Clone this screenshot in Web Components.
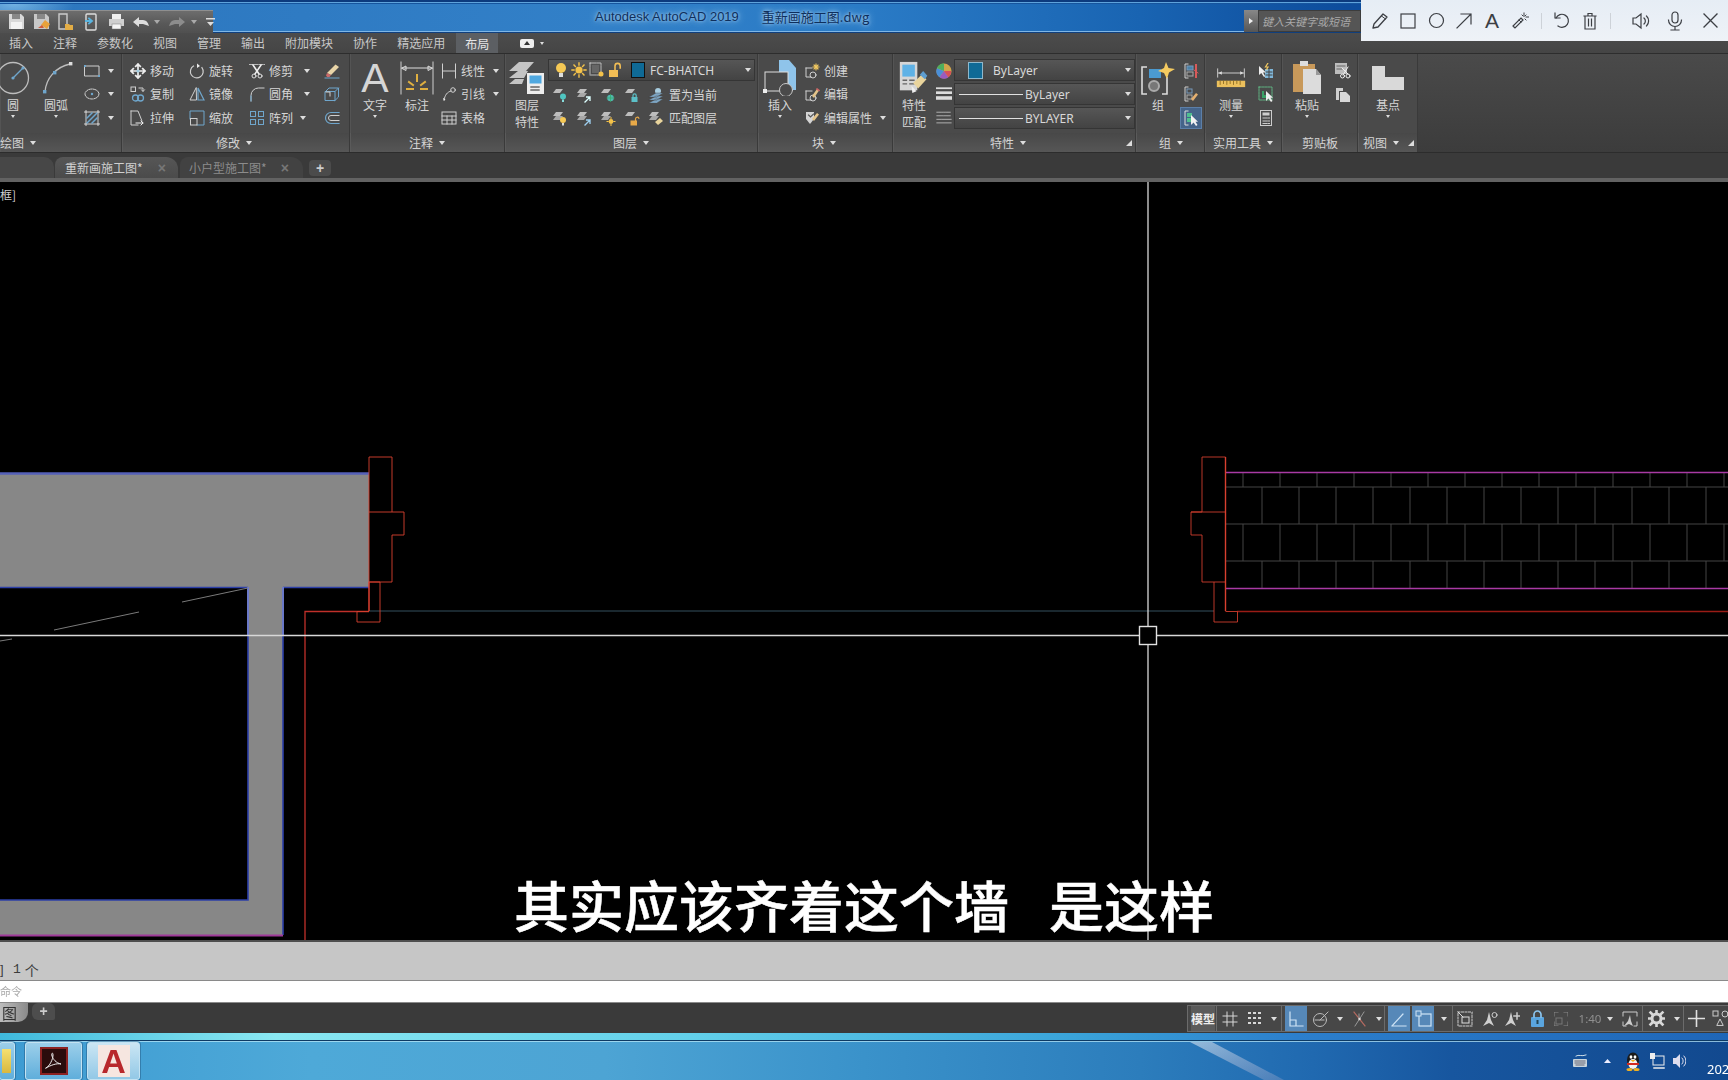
<!DOCTYPE html>
<html lang="zh"><head><meta charset="utf-8"><title>AutoCAD</title>
<style>
html,body{margin:0;padding:0;background:#000;overflow:hidden}
body{width:1728px;height:1080px;font-family:"Noto Sans CJK SC","Noto Sans",sans-serif;font-size:12px;color:#d8d8d8}
</style></head><body>
<cad-app>
 <win-title></win-title>
 <menu-tabs></menu-tabs>
 <rb-ribbon>
  <rb-panel label="绘图" w="122" lx="0">
    <rb-big label="圆" icon="circle" arrow style="margin-left:-7px"></rb-big>
    <rb-big label="圆弧" icon="arc" arrow style="margin-left:3px"></rb-big>
    <rb-col style="margin-left:8px">
      <rb-small icon="rect" arrow am="8"></rb-small><rb-small icon="ellipse" arrow am="8"></rb-small><rb-small icon="hatch" arrow am="8"></rb-small>
    </rb-col>
  </rb-panel>
  <rb-panel label="修改" w="228" lx="94">
    <rb-col w="59" style="margin-left:8px"><rb-small icon="move" text="移动"></rb-small><rb-small icon="copy" text="复制"></rb-small><rb-small icon="stretch" text="拉伸"></rb-small></rb-col>
    <rb-col w="60"><rb-small icon="rotate" text="旋转"></rb-small><rb-small icon="mirror" text="镜像"></rb-small><rb-small icon="scale" text="缩放"></rb-small></rb-col>
    <rb-col w="75"><rb-small icon="trim" text="修剪" arrow am="11"></rb-small><rb-small icon="fillet" text="圆角" arrow am="11"></rb-small><rb-small icon="array" text="阵列" arrow am="7"></rb-small></rb-col>
    <rb-col><rb-small icon="eraser"></rb-small><rb-small icon="box3d"></rb-small><rb-small icon="offset"></rb-small></rb-col>
  </rb-panel>
  <rb-panel label="注释" w="155" lx="59">
    <rb-big label="文字" icon="textA" arrow style="margin-left:5px"></rb-big>
    <rb-big label="标注" icon="dim" style="margin-left:2px"></rb-big>
    <rb-col style="margin-left:4px"><rb-small icon="linear" text="线性" arrow am="8"></rb-small><rb-small icon="leader" text="引线" arrow am="8"></rb-small><rb-small icon="table" text="表格"></rb-small></rb-col>
  </rb-panel>
  <rb-panel label="图层" w="253" lx="108">
    <rb-big label="图层" label2="特性" icon="layerprops" style="margin-left:2px"></rb-big>
    <rb-col style="margin-left:1px">
      <rb-select w="207" layer text="FC-BHATCH"></rb-select>
      <rb-iconrow icons="l1,l2,l3,l4,l5" text="置为当前"></rb-iconrow>
      <rb-iconrow icons="m1,m2,m3,m4,m5" text="匹配图层"></rb-iconrow>
    </rb-col>
  </rb-panel>
  <rb-panel label="块" w="135" lx="54">
    <rb-big label="插入" icon="insert" arrow style="margin-left:2px"></rb-big>
    <rb-col style="margin-left:4px"><rb-small icon="bcreate" text="创建"></rb-small><rb-small icon="bedit" text="编辑"></rb-small><rb-small icon="battr" text="编辑属性" arrow am="8"></rb-small></rb-col>
  </rb-panel>
  <rb-panel label="特性" w="243" lx="97" corner>
    <rb-big label="特性" label2="匹配" icon="match" style="margin-left:1px"></rb-big>
    <rb-col w="18" style="margin-left:2px"><rb-small icon="wheel"></rb-small><rb-small icon="lweight"></rb-small><rb-small icon="ltype"></rb-small></rb-col>
    <rb-col>
      <rb-select w="181" swatch="13" text="ByLayer" tm="10"></rb-select>
      <rb-select w="181" line="64" text="ByLayer" tm="2"></rb-select>
      <rb-select w="181" line="64" text="BYLAYER" tm="2"></rb-select>
    </rb-col>
  </rb-panel>
  <rb-panel label="组" w="69" lx="23">
    <rb-big label="组" icon="group" w="36" style="margin-left:4px"></rb-big>
    <rb-col w="24" style="margin-left:3px"><rb-small icon="ungroup" box></rb-small><rb-small icon="gedit" box></rb-small><rb-small icon="gsel" box active></rb-small></rb-col>
  </rb-panel>
  <rb-panel label="实用工具" w="77" lx="8">
    <rb-big label="测量" icon="measure" arrow style="margin-left:6px"></rb-big>
    <rb-col w="24" style="margin-left:3px"><rb-small icon="qsel" box></rb-small><rb-small icon="count" box></rb-small><rb-small icon="calc" box></rb-small></rb-col>
  </rb-panel>
  <rb-panel label="剪贴板" w="76" lx="20" noarrow>
    <rb-big label="粘贴" icon="paste" arrow style="margin-left:5px"></rb-big>
    <rb-col w="24" style="margin-left:4px"><rb-small icon="cut" box></rb-small><rb-small icon="pcopy" box></rb-small></rb-col>
  </rb-panel>
  <rb-panel label="视图" w="60" lx="5" corner>
    <rb-big label="基点" icon="base" arrow style="margin-left:10px"></rb-big>
  </rb-panel>
 </rb-ribbon>
 <file-tabs></file-tabs>
 <cad-canvas></cad-canvas>
 <cmd-area></cmd-area>
 <layout-bar></layout-bar>
 <task-bar></task-bar>
 <note-toolbar></note-toolbar>
</cad-app>
<script>
const FONT='"Noto Sans CJK SC","Noto Sans",sans-serif';
const ARW='.arw{display:inline-block;width:0;height:0;border:3px solid transparent;border-top:4px solid #ddd;border-bottom:0;flex:none}';
const G='#cfcfcf',B='#6fa6cc';
const sv=(w,h,s)=>`<svg xmlns="http://www.w3.org/2000/svg" width="${w}" height="${h}" viewBox="0 0 ${w} ${h}" fill="none" stroke-linecap="square" style="display:block">${s}</svg>`;
const sz=(rw,rh,w,h,s)=>`<svg xmlns="http://www.w3.org/2000/svg" width="${rw}" height="${rh}" viewBox="0 0 ${w} ${h}" fill="none" stroke-linecap="square" preserveAspectRatio="none" style="display:block">${s}</svg>`;
const s16=s=>sv(16,16,s);
const slab=(y,f)=>`<path d="M1 ${y+4}L4 ${y}h7L8 ${y+4}z" fill="${f||'#bdbdbd'}"/>`;
const L1=s=>s16(slab(2)+s);
const L2=s=>s16(slab(2)+slab(6,'#a8a8a8')+s);
const ICONS={
circle:sv(36,36,`<circle cx="18" cy="18" r="15.5" stroke="#bdbdbd" stroke-width="1.3"/><path d="M18 18L28 8" stroke="${B}" stroke-width="1.3"/><circle cx="18" cy="18" r="1.6" fill="${B}"/><circle cx="28" cy="8" r="1.6" fill="${B}"/>`),
arc:sv(36,36,`<path d="M7 32C8 18 18 7 32 4" stroke="#bdbdbd" stroke-width="1.3"/><rect x="5" y="30" width="3.4" height="3.4" fill="${B}"/><rect x="15" y="11" width="3.4" height="3.4" fill="${B}"/><rect x="31" y="2" width="3.4" height="3.4" fill="#ddd"/>`),
rect:s16(`<path d="M1 3h14v10H1z" stroke="${G}"/><rect x="0" y="2" width="2" height="2" fill="${B}"/><rect x="14" y="12" width="2" height="2" fill="${B}"/>`),
ellipse:s16(`<ellipse cx="8" cy="8" rx="7" ry="5" stroke="${G}" stroke-dasharray="3 1.2"/><circle cx="8" cy="8" r="1.2" fill="${B}"/>`),
hatch:s16(`<rect x="2" y="2" width="12" height="12" stroke="${G}"/><path d="M3 8l5-5M3 13L13 3M8 13l5-5" stroke="${B}" stroke-width="1.5"/><path d="M0 2h2M2 0v2M14 0v2M14 2h2M0 14h2M2 14v2M14 14h2M14 14v2" stroke="${G}"/>`),
move:s16(`<path d="M8 1v14M1 8h14M8 1L5.7 3.3M8 1l2.3 2.3M8 15l-2.3-2.3M8 15l2.3-2.3M1 8l2.3-2.3M1 8l2.3 2.3M15 8l-2.3-2.3M15 8l-2.3 2.3" stroke="#eee" stroke-width="1.7"/><circle cx="8" cy="8" r="1.6" fill="#9ecbe0"/>`),
copy:s16(`<rect x="1" y="1" width="4.5" height="4.5" stroke="${G}"/><path d="M9 2h4v3M11.5 3.8L13 5.5l1.5-1.7" stroke="${G}"/><circle cx="5.5" cy="12" r="3" stroke="${B}" stroke-width="1.3"/><circle cx="10.5" cy="12" r="3" stroke="${B}" stroke-width="1.3"/>`),
stretch:s16(`<path d="M1 1h7l4 10M1 1v14h7" stroke="${G}"/><path d="M6 13h7M11 11l2 2-2 2" stroke="#eee"/>`),
rotate:s16(`<path d="M11.5 3.2A6.4 6.4 0 1 1 3 4.5" stroke="${G}" stroke-width="1.2" transform="rotate(20 8 8)"/><path d="M8 .5l3 2.5-3 2z" fill="#eee"/>`),
mirror:s16(`<path d="M7 2L1 14h6z" stroke="${G}"/><path d="M9 2l6 12H9z" stroke="${B}" stroke-width="1.2"/>`),
scale:s16(`<path d="M1 9V1h14v14H8" stroke="${B}"/><rect x="1.5" y="8.5" width="6.5" height="6.5" stroke="${G}"/>`),
trim:s16(`<path d="M0 1.5h16" stroke="#bbb" stroke-dasharray="1.5 1"/><path d="M4 2l6 9M12 2l-6 9" stroke="#eee" stroke-width="1.6"/><circle cx="5" cy="13" r="2" stroke="#ddd"/><circle cx="11" cy="13" r="2" stroke="#ddd"/>`),
fillet:s16(`<path d="M2 15V9.5A7.5 7.5 0 0 1 9.5 2H15" stroke="${G}"/><path d="M2 15v-5" stroke="${B}"/>`),
array:s16(`<rect x="1.5" y="1.5" width="5" height="5" stroke="${B}"/><rect x="9.5" y="1.5" width="5" height="5" stroke="${B}"/><rect x="1.5" y="9.5" width="5" height="5" stroke="${B}"/><rect x="9.5" y="9.5" width="5" height="5" stroke="${B}"/>`),
eraser:s16(`<path d="M3 10l8.5-8.5L15 4l-8 8z" fill="#e9d5a8"/><path d="M3 10l4 2-1.5 2H3.2L2 12.5z" fill="#c96a6a"/><path d="M1 15h14" stroke="${B}"/>`),
box3d:s16(`<path d="M1.5 5.5h9.5v9H1.5zM1.5 5.5L5 2h9.5v9L11 14.5M11 5.5L14.5 2" stroke="${B}"/><path d="M2 6h4v4" stroke="${G}"/>`),
offset:s16(`<path d="M15 2.5H7a5.5 5.5 0 0 0 0 11h8" stroke="${B}" stroke-width="1.2"/><path d="M15 5.5H7a2.5 2.5 0 0 0 0 5h8" stroke="${G}"/>`),
textA:`<span style="font:500 41px/36px 'Liberation Sans',sans-serif;color:#d6d6d6;display:block;height:36px;overflow:hidden">A</span>`,
dim:sv(36,36,`<path d="M2 2v32M34 2v32" stroke="${G}"/><path d="M3 8h30M3 8l4-2v4zM33 8l-4-2v4z" stroke="#ddd"/><path d="M18 15v6M10 22l4 3M26 22l-4 3M8 29h6M22 29h6" stroke="#e0b040" stroke-width="2"/>`),
linear:s16(`<path d="M1.5 1v14M14.5 1v14M2 8h12" stroke="${G}"/>`),
leader:s16(`<circle cx="12" cy="4" r="2.3" stroke="${G}"/><path d="M10 5C6 6 4 9 3 14" stroke="${G}"/><path d="M3 15l-1-3 2.5 1z" fill="#eee"/>`),
table:s16(`<rect x="1" y="2" width="14" height="12" stroke="${G}"/><path d="M1 6h14M1 10h14M6 6v8M11 6v8" stroke="${G}"/>`),
layerprops:sv(36,36,`<path d="M0 11L10 2h15l-8 9zM0 18l9-7h10l-4 7zM0 24l6-5h9l-2 5z" fill="#c4c4c4"/><rect x="18" y="13" width="17" height="21" fill="#eee"/><rect x="20.5" y="15.5" width="12" height="8" fill="#4fa8e0"/><path d="M22 27h8M22 30h8" stroke="#666" stroke-width="1.4"/>`),
bulb:s16(`<circle cx="8" cy="6" r="5" fill="#f6c955"/><rect x="6" y="11" width="4" height="4" fill="#ddd"/>`),
sun:s16(`<circle cx="8" cy="8" r="3.6" fill="#f4c24a"/><path d="M8 1v2M8 13v2M1 8h2M13 8h2M3 3l1.4 1.4M11.6 11.6L13 13M3 13l1.4-1.4M11.6 4.4L13 3" stroke="#f4c24a" stroke-width="1.4"/>`),
freeze:s16(`<rect x="1" y="1" width="11" height="12" stroke="#bbb" stroke-dasharray="2.5 1"/><rect x="3" y="3" width="7" height="8" fill="#666"/><circle cx="12" cy="12" r="2.5" fill="#f4c24a"/>`),
lockopen:s16(`<rect x="2" y="8" width="9" height="7" fill="#f1bd55"/><path d="M8 8V4a2.6 2.6 0 0 1 5.2 0v2" stroke="#f1bd55" stroke-width="1.6"/>`),
l1:L1(`<circle cx="11" cy="9.5" r="3" fill="#4fc4c0"/><rect x="10" y="12.5" width="2" height="2.5" fill="#8dd"/>`),
l2:L2(`<path d="M9 15l5-5M14 10v3.4M14 10h-3.4" stroke="#dff" stroke-width="1.3"/>`),
l3:L1(`<circle cx="10.5" cy="11" r="3.3" fill="#4fb8b0"/><path d="M7 11h7M10.5 7.5v7" stroke="#3a6" stroke-width=".7"/>`),
l4:L1(`<rect x="7.5" y="10" width="6" height="5" fill="#5cc0c8"/><path d="M9 10V8.5a1.6 1.6 0 0 1 3.2 0V10" stroke="#5cc0c8" stroke-width="1.2"/>`),
l5:s16(`<circle cx="10" cy="4" r="3" fill="#a8cde0"/><path d="M1 10l7-4h7l-6 4zM1 13l7-4h7l-6 4zM1 16l7-4h7l-6 4z" fill="#7ea6c4" stroke="#444" stroke-width=".4"/>`),
m1:L2(`<circle cx="11" cy="10" r="3" fill="#f6c955"/><rect x="10" y="13" width="2" height="2.5" fill="#ddd"/>`),
m2:L2(`<path d="M9 15l5-5M14 10v3.4M14 10h-3.4" stroke="#9fd0f0" stroke-width="1.3"/>`),
m3:L2(`<circle cx="11" cy="11.5" r="2.4" fill="#f4c24a"/><path d="M11 7.5v1.2M11 14.2v1.3M7 11.5h1.2M13.8 11.5H15" stroke="#f4c24a"/>`),
m4:L1(`<rect x="6.5" y="10.5" width="6.5" height="5" fill="#e8a948"/><path d="M11.5 10.5V9a1.8 1.8 0 0 1 3.4-.8" stroke="#e8a948" stroke-width="1.2"/>`),
m5:L2(`<path d="M7 12l5-4 3 3-5 4z" fill="#e8d49c"/>`),
insert:sv(36,36,`<path d="M17 0h10l7 8v22H17z" fill="#8fc4ea"/><rect x="3" y="12" width="23" height="19" fill="#4a4a4a" stroke="#ddd"/><circle cx="24" cy="30" r="6.5" fill="#4a4a4a" stroke="#c8c8c8"/><rect x="1" y="29" width="4" height="4" fill="#eee"/>`),
bcreate:s16(`<path d="M2 5v9h5M2 5h6" stroke="${G}"/><circle cx="9" cy="12" r="3" stroke="${G}"/><path d="M12 1v6M9 4h6M10 2l4 4M14 2l-4 4" stroke="#f1c860" stroke-width="1.1"/>`),
bedit:s16(`<path d="M2 5v9h5M2 5h6" stroke="${G}"/><circle cx="9" cy="12" r="3" stroke="${G}"/><path d="M8 10l5-7 2 1.5L10 12z" fill="#e4c48a"/><path d="M13 3l2 1.5" stroke="#c66" stroke-width="1.6"/>`),
battr:s16(`<path d="M2 2h8v7l-4 5-4-5z" fill="#d4d4d4"/><path d="M4.5 5l2 2 3-3" stroke="#555" stroke-width="1.2"/><path d="M8 9l5-6 2 1.5L10 11z" fill="#e4c48a"/>`),
match:sz(30,33,36,36,`<rect x="1" y="1" width="21" height="31" fill="#d6d6d6"/><rect x="4" y="4" width="15" height="13" fill="#5fb2e6"/><path d="M5 21h4M5 25h4M13 21h5M13 25h5" stroke="#666" stroke-width="1.5"/><path d="M17 24l10-9 6 5-10 10z" fill="#e9d49c"/><path d="M25 15l4-4 5 5-3 4z" fill="#5e9ed0"/><path d="M15 27l6 6-5 2z" fill="#eee"/>`),
wheel:sv(18,18,`<circle cx="9" cy="9" r="8.5" fill="#d2a54a"/><path d="M9 9V.5A8.5 8.5 0 0 0 1 6z" fill="#4fae5d"/><path d="M9 9L1 6a8.5 8.5 0 0 0 3 10z" fill="#4a8fd8"/><path d="M9 9L4 16a8.5 8.5 0 0 0 10 0z" fill="#9a5bc0"/><path d="M9 9l5 7a8.5 8.5 0 0 0 3-7z" fill="#d8505a"/>`),
lweight:sv(18,18,`<path d="M1 2.5h16" stroke="#ddd" stroke-width="2"/><path d="M1 7.5h16" stroke="#ddd" stroke-width="3"/><path d="M1 13.5h16" stroke="#ddd" stroke-width="4"/>`),
ltype:sv(18,18,`<path d="M1 2.5h16" stroke="#bbb" stroke-dasharray="1 1"/><path d="M1 6.5h16" stroke="#bbb" stroke-dasharray="3 1"/><path d="M1 10.5h16" stroke="#bbb" stroke-dasharray="5 1"/><path d="M1 14.5h16" stroke="#bbb"/>`),
group:sv(36,36,`<path d="M7 7H2v27h5M27 17v17h-5" stroke="#ddd" stroke-width="1.6" stroke-linecap="butt"/><rect x="9" y="9" width="12" height="9" fill="#4b9ad0"/><circle cx="14" cy="26" r="5" stroke="#aaa" stroke-width="2" fill="#777"/><path d="M26 2l2.5 6L35 9l-6 3.5L27 19l-3-6-6-2 6-3z" fill="#f4ca60"/>`),
ungroup:s16(`<path d="M5 1H2v14h3" stroke="${G}"/><rect x="4" y="3" width="6" height="4" fill="#4b9ad0" fill-opacity=".7" stroke="#79b"/><rect x="4" y="9" width="6" height="4" stroke="#aaa"/><path d="M13 2v12" stroke="#d85a5a" stroke-width="2"/><path d="M11 7l4 3" stroke="#d85a5a"/>`),
gedit:s16(`<path d="M5 1H2v14h3" stroke="${G}"/><rect x="4" y="3" width="5" height="4" stroke="#79b"/><rect x="4" y="9" width="5" height="4" stroke="#aaa"/><path d="M8 13l5-6 2 1.500L10 15z" fill="#e4b070"/>`),
gsel:s16(`<path d="M5 1H2v14h3" stroke="#ddd"/><rect x="4" y="3" width="5" height="4" fill="#4fbf90"/><rect x="4" y="8" width="5" height="4" fill="#4fbf90"/><path d="M8 5v10l2.600-2.500L13 16l1.500-1-2-3.300H15z" fill="#f2f2f2"/>`),
measure:sz(30,20,36,22,`<path d="M2 1v9M34 1v9M3 5.500h30" stroke="#ddd"/><path d="M3 5.500l4-2v4zM33 5.500l-4-2v4z" fill="#ddd"/><rect x="1" y="14" width="34" height="7" fill="#ecc05c"/><path d="M5 14v4M9 14v3M13 14v4M17 14v3M21 14v4M25 14v3M29 14v4" stroke="#8a6a20"/>`),
qsel:s16(`<rect x="7" y="6" width="8" height="9" fill="#7fb6d8"/><path d="M8 9h6M8 12h6M11 6v9" stroke="#444"/><path d="M1 3v9l2.300-2L6 14l1.200-.7L5 9.500h3z" fill="#eee"/><path d="M10 0L7.500 4H10L8.500 6.500" stroke="#f1c860" stroke-width="1.200"/>`),
count:s16(`<rect x="1" y="1" width="13" height="13" stroke="#5fb080" stroke-dasharray="2 1"/><path d="M4 5v7h4V9H6V5z" fill="#3aa066"/><path d="M8 5v10l2.500-2.500L13 16l1.500-1-2-3.300H15z" fill="#eee"/>`),
calc:s16(`<rect x="2.500" y="0.500" width="11" height="15" stroke="#ccc"/><rect x="4.500" y="2.500" width="7" height="3" fill="#ccc"/><path d="M5 8h1.500M7.500 8H9M10 8h1.500M5 11h1.500M7.500 11H9M10 11h1.500M5 13.500h1.500M7.500 13.500H9M10 13.500h1.500" stroke="#ccc"/>`),
paste:sv(30,36,`<rect x="1" y="4" width="22" height="28" fill="#c8995a"/><rect x="8" y="1" width="8" height="5" fill="#ddd"/><path d="M11 9h13l5 6v19H11z" fill="#dcdcdc"/><path d="M24 9v6h5z" fill="#999"/>`),
cut:s16(`<rect x="0" y="0" width="12" height="11" fill="#bdbdbd"/><path d="M2 3h8M2 6h5" stroke="#666"/><path d="M7 5l6 6M13 4l-5 8" stroke="#eee"/><circle cx="7.500" cy="13" r="2" stroke="#eee"/><circle cx="13" cy="13" r="2" stroke="#eee"/>`),
pcopy:s16(`<path d="M1 2h7v3H4v9H1z" fill="#cfcfcf"/><path d="M5 6h6l4 4v6H5z" fill="#d8d8d8"/>`),
base:sv(34,28,`<path d="M1 2h13v11h19v13H1z" fill="#d9d9d9"/>`)
};
const mk=(cls,tag)=>customElements.define(tag,cls);
class Base extends HTMLElement{
 constructor(){super();this.attachShadow({mode:'open'})}
 connectedCallback(){this.shadowRoot.innerHTML=this.html()}
}
mk(class extends Base{html(){return `<style>:host{display:flex;flex-direction:column;position:relative;width:1728px;height:1080px;overflow:hidden;filter:blur(.45px)}</style><slot></slot>`}},'cad-app');

mk(class extends Base{html(){
 const q=[sv(17,17,`<path d="M1 1h12l3 3v12H1z" fill="#d8d8d8"/><rect x="4" y="1" width="8" height="5" fill="#888"/><rect x="3" y="9" width="11" height="7" fill="#f2f2f2"/>`),
 sv(17,17,`<path d="M1 1h12l3 3v12H1z" fill="#c8c8c8"/><rect x="4" y="1" width="8" height="5" fill="#888"/><path d="M8 12l4-5 5 4-3 5z" fill="#e8a23c"/><path d="M5 15l4-3 2 3z" fill="#d05a3a"/>`),
 sv(16,18,`<path d="M1 1h8v15H1z" stroke="#ccc" stroke-width="1.400"/><path d="M7 11h4l1 1h3v5H7z" fill="#e3ad45"/>`),
 sv(12,18,`<rect x="1" y="1" width="10" height="16" rx="1" stroke="#ddd" stroke-width="1.400"/><path d="M0 8h6M4 5.500L7 8 4 10.500" stroke="#59b4e0" stroke-width="1.800"/>`),
 sv(17,17,`<rect x="4" y="1" width="9" height="5" fill="#eee"/><rect x="1" y="6" width="15" height="7" fill="#cfcfcf"/><rect x="4" y="11" width="9" height="5" fill="#f4f4f4" stroke="#777" stroke-width=".5"/>`)];
 return `<style>:host{display:block;height:33px;flex:none;position:relative;box-sizing:border-box;
 background:radial-gradient(60px 22px at 14px 4px,rgba(170,225,255,.55),transparent),linear-gradient(90deg,#2c76be 0,#3280c8 35%,#2a7bc6 50%,#1964b2 66%,#0d4c9c 78%,#0c4696 100%);overflow:hidden}
 .row{display:flex;height:33px;align-items:flex-start;position:relative}
 .top{position:absolute;left:0;right:0;top:0;height:4px;background:linear-gradient(#0c3b7e 0 2px,#5ea3dc 2px 3px,#16559e 3px)}
 .bot{position:absolute;left:0;right:0;bottom:0;height:2px;background:linear-gradient(#7fb6e4 0 1px,#103f7d 1px)}
 .qat{margin-top:10px;width:213px;height:23px;flex:none;display:flex;align-items:center;background:linear-gradient(#8f8f8f 0 1px,#6d6d6d 1px,#585858 60%,#505050);position:relative;z-index:1}
 .qat span{display:block;flex:none}
 ${ARW}
 .title{margin:8px 0 0 382px;color:#0f2f5c;font:13px/18px "Liberation Sans","Noto Sans CJK SC",sans-serif;display:flex;flex:none;width:266px;white-space:nowrap;text-shadow:0 0 7px rgba(190,225,250,.95),0 0 3px rgba(190,225,250,.7)}
 .title span,.title b{flex:none}
 .title b{font-weight:400;margin-left:23px;font-family:"Noto Sans CJK SC","Liberation Sans",sans-serif;font-size:13px}
 .sbtn{margin:10px 0 0 -1px;width:14px;height:22px;flex:none;background:linear-gradient(#888,#555);display:flex;align-items:center;justify-content:center;margin-left:383px}
 .sbtn i{border:3px solid transparent;border-left:4px solid #eee;border-right:0}
 .search{margin-top:10px;width:103px;height:22px;flex:none;box-sizing:border-box;background:#555;border:1px solid #3c3c3c;color:#a9a9a9;font:italic 11px/20px ${FONT};padding-left:3px;white-space:nowrap;overflow:hidden}
 </style><div class="top"></div><div class="bot"></div>
 <div class="row"><div class="qat">
 <span style="margin-left:8px">${q[0]}</span><span style="margin-left:8px">${q[1]}</span><span style="margin-left:8px">${q[2]}</span><span style="margin-left:11px">${q[3]}</span><span style="margin-left:11px">${q[4]}</span>
 <span style="margin-left:8px">${sv(16,10,`<path d="M6 0L0 5l6 5V7h4l6 2c-1-4-3-6-6-6H6z" fill="#ddd"/>`)}</span><i class="arw" style="margin-left:5px;border-top-color:#aaa"></i>
 <span style="margin-left:9px">${sv(16,10,`<path d="M10 0l6 5-6 5V7H6L0 9c1-4 3-6 6-6h4z" fill="#8c8c8c"/>`)}</span><i class="arw" style="margin-left:6px;border-top-color:#aaa"></i>
 <span style="margin-left:9px">${sv(9,8,`<path d="M0 0h9v1.500H0zM1 4h7L4.500 8z" fill="#ddd"/>`)}</span>
 </div>
 <div class="title"><span>Autodesk AutoCAD 2019</span><b>重新画施工图.dwg</b></div>
 <div class="sbtn"><i></i></div><div class="search">键入关键字或短语</div></div>`}},'win-title');

mk(class extends Base{html(){
 const t=['插入','注释','参数化','视图','管理','输出','附加模块','协作','精选应用'];
 return `<style>:host{display:block;height:21px;flex:none;background:linear-gradient(#4c4c4c,#454545);border-bottom:1px solid #2d2d2d;box-sizing:border-box}
 ${ARW}
 nav{display:flex;align-items:center;height:20px;padding-left:9px;gap:20px;font:12px/22px ${FONT};color:#c8c8c8}
 .on{background:#5c5f63;padding:0 9px;margin-left:-9px;color:#e6e6e6;height:20px;width:24px;line-height:21px}
 .c{display:flex;align-items:center;gap:6px;margin-left:2px}
 </style><nav>${t.map(x=>`<span>${x}</span>`).join('')}<span class="on">布局</span>
 <span class="c">${sv(14,9,`<rect width="14" height="9" rx="2" fill="#eee"/><path d="M7 2l3 4H4z" fill="#333"/>`)}<i class="arw" style="border-width:2.500px;border-top-width:3px;border-bottom:0"></i></span></nav>`}},'menu-tabs');

mk(class extends Base{html(){return `<style>:host{display:flex;height:98px;flex:none;background:linear-gradient(#4a4a4a,#3c3c3c);border-bottom:1px solid #2c2c2c;box-sizing:content-box;overflow:hidden}</style><slot></slot>`}},'rb-ribbon');

mk(class extends Base{html(){
 const w=this.getAttribute('w'),lx=this.getAttribute('lx')||0;
 return `<style>:host{display:flex;flex-direction:column;flex:none;box-sizing:border-box;width:${w}px;height:98px;background:#4a4a4a;border-right:1px solid #3a3a3a;box-shadow:inset 1px 0 #545454;overflow:hidden}
 ${ARW}
 .c{height:79px;display:flex;align-items:flex-start;padding-top:5px;box-sizing:border-box}
 .l{height:19px;display:flex;align-items:center;padding-left:${lx}px;gap:6px;background:linear-gradient(#484848,#565656);font:12px/18px ${FONT};color:#d4d4d4;white-space:nowrap;box-shadow:inset 1px 0 #5a5a5a}
 .k{margin-left:auto;margin-right:3px;width:0;height:0;border:3px solid transparent;border-right-color:#ddd;border-bottom-color:#ddd}
 </style><div class="c"><slot></slot></div><div class="l"><span>${this.getAttribute('label')}</span>${this.hasAttribute('noarrow')?'':'<i class="arw"></i>'}${this.hasAttribute('corner')?'<i class="k"></i>':''}</div>`}},'rb-panel');

mk(class extends Base{html(){
 const w=this.getAttribute('w')||40,l2=this.getAttribute('label2');
 return `<style>:host{display:flex;flex-direction:column;align-items:center;flex:none;width:${w}px;font:12px/16px ${FONT};color:#d6d6d6}
 ${ARW}
 .i{height:37px;display:flex;align-items:center;justify-content:center;margin-bottom:1px}
 .t{height:16px;white-space:nowrap}.t2{height:17px;line-height:18px}
 .arw{margin-top:2px;border-width:2.500px;border-top-width:3px;border-bottom:0}
 </style><div class="i">${ICONS[this.getAttribute('icon')]||''}</div><div class="t">${this.getAttribute('label')}</div>${l2?`<div class="t t2">${l2}</div>`:''}${this.hasAttribute('arrow')?'<i class="arw"></i>':''}`}},'rb-big');

mk(class extends Base{html(){const w=this.getAttribute('w');
 return `<style>:host{display:flex;flex-direction:column;flex:none;${w?`width:${w}px;`:''}}</style><slot></slot>`}},'rb-col');

mk(class extends Base{html(){
 const t=this.getAttribute('text'),am=this.getAttribute('am')||8,box=this.hasAttribute('box'),act=this.hasAttribute('active');
 return `<style>:host{display:flex;align-items:center;height:23.5px;font:12px/24px ${FONT};color:#d6d6d6;white-space:nowrap;${box?'justify-content:center;':''}}
 ${ARW}
 .i{flex:none;${box?'width:22px;height:22px;':'width:16px;height:16px;'}display:flex;align-items:center;justify-content:center;${act?'background:#45648a;box-shadow:inset 0 0 0 1px #5c7fa8;':''}}
 .t{margin-left:4px}.arw{margin-left:${am}px}
 </style><span class="i">${ICONS[this.getAttribute('icon')]||''}</span>${t?`<span class="t">${t}</span>`:''}${this.hasAttribute('arrow')?'<i class="arw"></i>':''}`}},'rb-small');

mk(class extends Base{html(){
 const ic=this.getAttribute('icons').split(',');
 return `<style>:host{display:flex;align-items:center;height:23.5px;font:12px/24px ${FONT};color:#d6d6d6;white-space:nowrap}
 .b{width:24px;height:16px;display:flex;justify-content:center;flex:none}.t{margin-left:1px}</style>
 ${ic.map(n=>`<span class="b">${ICONS[n]}</span>`).join('')}<span class="t">${this.getAttribute('text')}</span>`}},'rb-iconrow');

mk(class extends Base{html(){
 const w=this.getAttribute('w'),t=this.getAttribute('text'),tm=this.getAttribute('tm')||0,sw=this.getAttribute('swatch'),ln=this.getAttribute('line'),lay=this.hasAttribute('layer');
 let pre='';
 if(lay)pre=`<span style="width:3px"></span>`+['bulb','sun','freeze','lockopen'].map(n=>`<span style="width:18px;display:flex;justify-content:center;flex:none">${ICONS[n]}</span>`).join('')+`<i class="sw" style="margin-left:7px;width:14px;height:16px;background:#0f6a96;border:1px solid #111"></i>`;
 if(sw)pre=`<i class="sw" style="margin-left:${sw}px;width:15px;height:17px;background:#0f6a96;border:1px solid #8fb8cc"></i>`;
 if(ln)pre=`<i class="ln" style="margin-left:4px;width:${ln}px"></i>`;
 return `<style>:host{display:block;height:24px;flex:none;box-sizing:border-box}
 ${ARW}
 .s{width:${w}px;height:22px;box-sizing:border-box;display:flex;align-items:center;background:linear-gradient(#565656,#434343);border:1px solid #353535;font:12px/20px "Noto Sans","Liberation Sans",sans-serif;color:#d8d8d8;white-space:nowrap}
 .sw{display:block;flex:none;box-sizing:border-box}.ln{display:block;height:1px;background:#e0e0e0;flex:none}
 .t{margin-left:${lay?5:tm}px;padding-top:1px}.arw{margin-left:auto;margin-right:3px;border-width:3.500px;border-top-width:4px;border-bottom:0}
 </style><div class="s">${pre}<span class="t">${t}</span><i class="arw"></i></div>`}},'rb-select');

mk(class extends Base{html(){
 const x=`<span class="x">×</span>`;
 return `<style>:host{display:block;height:29px;flex:none;background:#3a3a3a;position:relative;box-sizing:border-box;border-bottom:4px solid #626262}
 .r{display:flex;align-items:flex-end;height:25px;font:12px/20px ${FONT}}
 .t{height:21px;box-sizing:border-box;display:flex;align-items:center;flex:none;border-radius:8px 12px 0 0}
 .x{font:700 14px/1 "Liberation Sans",sans-serif;color:#777;margin-left:auto}
 .a{width:54px;background:#474747;margin-left:0;border-radius:0 10px 0 0}
 .b{width:123px;margin-left:1px;background:linear-gradient(#565656,#4b4b4b);color:#d0d0d0;padding:0 12px 0 10px}
 .c{width:123px;margin-left:2px;background:#424242;color:#8c8c8c;padding:0 14px 0 9px}
 .p{width:22px;height:16px;margin:0 0 2px 6px;background:#4b4b4b;border-radius:4px;color:#ccc;font:700 14px/16px "Liberation Sans",sans-serif;text-align:center;flex:none}
 </style><div class="r"><div class="t a"></div><div class="t b">重新画施工图*${x}</div><div class="t c">小户型施工图*${x}</div><div class="p">+</div></div>`}},'file-tabs');

mk(class extends Base{html(){
 let h='';const rows=[[472.500,487,1243],[487,524,1262],[524,561,1243],[561,588,1262]];
 rows.forEach(r=>{for(let x=r[2];x<1730;x+=37)h+=`M${x} ${r[0]}V${r[1]}`});
 for(const y of [487,524,561])h+=`M1226 ${y}H1728`;
 const red='#d8402f';
 return `<style>:host{display:block;height:758px;flex:none;position:relative;background:#000;overflow:hidden}
 svg{display:block;position:absolute;left:0;top:0}
 .lb{position:absolute;left:0;top:5px;font:12px/16px ${FONT};color:#cfcfcf}
 .cap{position:absolute;left:514px;top:685px;height:72px;display:flex;gap:40px;font:500 55px/72px ${FONT};color:#fff;white-space:nowrap;-webkit-text-stroke:.5px #fff}
 </style>
 <svg width="1728" height="758" viewBox="0 182 1728 758" fill="none">
 <path d="M0 473H369V587H283V936H0V900H248V587H0z" fill="#878787"/>
 <path d="M0 473.500H369" stroke="#5560b8" stroke-width="2.500"/>
 <path d="M0 587.500H248M283 587.500H369M248 587V900H0M283 587V935" stroke="#2c3fa8" stroke-width="1.600"/>
 <path d="M248 587V636M283 587V636" stroke="#6a78c8" stroke-width="2"/>
 <path d="M0 935.500H283" stroke="#a03a9a" stroke-width="2"/>
 <path d="M182 602L248 588M54 630L139 612M0 641L12 639" stroke="#7a7a7a"/>
 <path d="M369 611H1214" stroke="#34505e"/>
 <path d="M305 940V611.500H369" stroke="#c0302a" stroke-width="1.300"/>
 <path d="M369 457H392V512H404V535H392V582H369ZM369 512H392M369 582H380V622H357V611.500H369" stroke="${red}" stroke-opacity=".9"/>
 <path d="M369 582V611" stroke="#e04030" stroke-width="1.500"/>
 <path d="${h}" stroke="#444"/>
 <path d="M1225 472.500H1728M1225 588.500H1728" stroke="#a83aa4" stroke-width="1.500"/>
 <path d="M1237 611.500H1728" stroke="#9a1c16" stroke-width="1.500"/>
 <path d="M1225.500 457H1202V512H1191V535H1202V582H1225.500M1191 512H1225.500M1214 582V622H1237.500V611.500H1225.500" stroke="${red}" stroke-opacity=".85"/>
 <path d="M1225.500 457V611" stroke="#d8402f" stroke-width="1.400"/>
 <path d="M0 635.500H1139M1157 635.500H1728M1148 182V626M1148 645V940" stroke="#d8d8d8" stroke-width="1.300"/>
 <rect x="1139.500" y="626.500" width="17" height="18" stroke="#e0e0e0" stroke-width="1.400"/>
 </svg>
 <span class="lb">框]</span>
 <div class="cap"><span>其实应该齐着这个墙</span><span>是这样</span></div>`}},'cad-canvas');

mk(class extends Base{html(){return `<style>:host{display:block;flex:none;height:63px;box-sizing:border-box;border-top:2px solid #4e4e4e}
 .h{height:38px;background:#c6c6c6;border-bottom:1px solid #8a8a8a;box-sizing:content-box;position:relative;font:13px/16px "Liberation Mono",${FONT};color:#3c3c3c}
 .h div{padding:20px 0 0 0;display:flex;align-items:center}
 .h em{font:400 13px/16px "Liberation Sans",sans-serif;width:13px;flex:none}
 .h b{font:400 14px/16px ${FONT};margin-left:4px}
 .w{height:21px;background:#fff;border-bottom:1px solid #8a8a8a;font:11px/20px ${FONT};color:#a8a8a8;overflow:hidden}
 </style><div class="h"><div><em>]</em><span>1</span><b>个</b></div></div><div class="w"><span>命令</span></div>`}},'cmd-area');

mk(class extends Base{html(){
 const W='#d8d8d8',bl='#cfe4f6';
 const I={
 grid:sv(16,16,`<path d="M5 1v14M11 1v14M1 5h14M1 11h14" stroke="${W}"/>`),
 dots:sv(15,15,`<path d="M2 2h1M7 2h1M12 2h1M2 7h1M7 7h1M12 7h1M2 12h1M7 12h1M12 12h1" stroke="${W}" stroke-width="2"/>`),
 ortho:sv(16,16,`<path d="M2 1v14h13M2 9h6v6" stroke="${bl}" stroke-width="1.200"/>`),
 polar:sv(18,16,`<circle cx="8" cy="9" r="6.500" stroke="#bbb"/><path d="M3 9h9M8 9l8-8" stroke="#bbb"/>`),
 iso:sv(15,16,`<path d="M2 1l11 14" stroke="#b56a60" stroke-width="1.200"/><path d="M12 1L3 15M7 3v4" stroke="#999"/><circle cx="7.500" cy="8" r="1.200" fill="#ddd"/>`),
 track:sv(16,16,`<path d="M1 15L12 3M1 15h14" stroke="${bl}" stroke-width="1.200"/>`),
 osnap:sv(17,17,`<rect x="4" y="4" width="12" height="12" stroke="${bl}" stroke-width="1.200"/><rect x="1" y="1" width="5" height="5" fill="#5c8fbe" stroke="${bl}"/>`),
 sel:sv(16,16,`<path d="M1 1h14v14H1z" stroke="#ccc" stroke-dasharray="2 1.500"/><rect x="5" y="6" width="7" height="6" stroke="#ddd"/><path d="M1 1l5 5" stroke="#ddd"/>`),
 an1:sv(16,16,`<path d="M7 1L5 9l-4 6 6-3 5 3-3-6-2-8z" fill="#d0d0d0"/><circle cx="12.500" cy="4" r="2.500" stroke="#ccc"/>`),
 an2:sv(16,16,`<path d="M7 1L5 9l-4 6 6-3 5 3-3-6-2-8z" fill="#d0d0d0"/><path d="M10 5h6M13 2v6" stroke="#ccc" stroke-width="1.500"/>`),
 lock:sv(15,17,`<rect x="1" y="7" width="13" height="10" rx="1" fill="#5aa5df"/><path d="M4 7V4.500a3.500 3.500 0 0 1 7 0V7" stroke="#8ac4ee" stroke-width="1.700"/><rect x="6.500" y="10" width="2" height="4" fill="#245"/>`),
 iso2:sv(14,14,`<path d="M0 4V0h4M10 0h4v4M14 10v4h-4M4 14H0v-4" stroke="#8a8a8a"/><rect x="2" y="6" width="6" height="6" stroke="#777"/>`),
 zoom:sv(16,16,`<path d="M1 5V1h14v4M1 11v4h3M15 11v4h-3" stroke="#ccc"/><path d="M8 4L6 10l-4 5 5-2 4 2-2-5-1-6z" fill="#ccc"/>`),
 gear:sv(17,17,`<circle cx="8.500" cy="8.500" r="4.500" stroke="#d8d8d8" stroke-width="3"/><path d="M8.500 0v3M8.500 14v3M0 8.500h3M14 8.500h3M2.500 2.500l2 2M12.500 12.500l2 2M2.500 14.500l2-2M12.500 4.500l2-2" stroke="#d8d8d8" stroke-width="2.600"/>`),
 plus:sv(17,17,`<path d="M8.500 0v17M0 8.500h17" stroke="#e0e0e0" stroke-width="1.600"/>`),
 cust:sv(17,17,`<rect x="1" y="1" width="5" height="5" stroke="#ccc"/><path d="M5 15l3-6 3 6z" stroke="#ccc"/><circle cx="13" cy="4" r="3" stroke="#ccc"/>`)
 };
 const items=[['t:模型',1191,24],['grid',1222,16],['dots',1247,15],['a',1270,7],['on:ortho',1285,22],['polar',1312,18],['a',1336,7],['iso',1352,15],['a',1375,7],['on:track',1388,22],['on:osnap',1412,22],['a',1440,7],['sel',1457,16],['an1',1482,16],['an2',1504,16],['lock',1530,15],['iso2',1554,14],['s:1:40',1578,24],['a',1607,6],['zoom',1622,16],['gear',1648,17],['a',1673,7],['plus',1688,17],['cust',1712,17]];
 let px=1188,out='';
 for(const [n,x,w] of items){
  let inner='',cl='';
  if(n==='a'){inner='<i class="arw"></i>'}
  else if(n.startsWith('t:')){inner=n.slice(2);cl=' tx'}
  else if(n.startsWith('s:')){inner=n.slice(2);cl=' sc'}
  else if(n.startsWith('on:')){inner=I[n.slice(3)];cl=' on'}
  else inner=I[n];
  out+=`<span class="it${cl}" style="margin-left:${x-px}px;width:${w}px">${inner}</span>`;px=x+w;
 }
 const seps=[1216,1281,1384,1452,1642,1683];
 return `<style>:host{display:flex;height:30px;flex:none;background:#3a3a3a;overflow:hidden;align-items:flex-start}
 ${ARW}
 .tabs{width:1187px;flex:none;display:flex;height:19px;font:12px/19px ${FONT};align-items:center}
 .t{width:28px;height:19px;background:linear-gradient(90deg,#bdbdbd,#8a8a8a);color:#333;border-radius:0 0 10px 0;overflow:hidden;flex:none;font-size:15px;white-space:nowrap;text-align:right;padding-right:11px;box-sizing:border-box}
 .p{width:23px;height:17px;margin:0 0 2px 4px;background:#4d4d4d;border-radius:6px 6px 2px 6px;color:#ccc;font:700 14px/17px "Liberation Sans",sans-serif;text-align:center;flex:none}
 .st{margin-top:2px;height:27px;width:541px;box-sizing:border-box;background:#474747;border:1px solid #6b6b6b;border-right:0;display:flex;align-items:center;flex:none;position:relative}
 .it{display:flex;height:25px;align-items:center;justify-content:center;flex:none;box-sizing:border-box}
 .on{background:#5688b8}
 .tx{font:600 12px/25px ${FONT};color:#eee;background:#5b5b5b}
 .sc{font:11.500px/25px "Noto Sans",sans-serif;color:#8f8f8f;white-space:nowrap}
 .sp{position:absolute;top:0;bottom:0;width:1px;background:#6b6b6b}
 </style><div class="tabs"><div class="t">图</div><div class="p">+</div></div>
 <div class="st">${out}${seps.map(x=>`<i class="sp" style="left:${x-1188}px"></i>`).join('')}</div>`}},'layout-bar');

mk(class extends Base{html(){
 const qq=sv(16,19,`<ellipse cx="8" cy="8" rx="6" ry="7.500" fill="#1a1a1a"/><ellipse cx="8" cy="12" rx="4.500" ry="5" fill="#f4f4f4"/><ellipse cx="6" cy="5" rx="1.400" ry="1.800" fill="#fff"/><ellipse cx="10" cy="5" rx="1.400" ry="1.800" fill="#fff"/><path d="M5.500 8h5L8 10z" fill="#f0b020"/><path d="M2 11h12v2H2z" fill="#d42a20"/><ellipse cx="4.500" cy="17.500" rx="3" ry="1.500" fill="#f0b020"/><ellipse cx="11.500" cy="17.500" rx="3" ry="1.500" fill="#f0b020"/>`);
 return `<style>:host{display:block;flex:none;height:47px;position:relative;overflow:hidden;
 background:linear-gradient(90deg,#3d9bd2 0,#4ea9d8 18%,#4da4d4 35%,#3a92ca 50%,#2c7dbc 66%,#2069b0 76%,#17569f 84%,#12498f 100%)}
 .line{height:7px;background:linear-gradient(90deg,#3fb9dc 0,#8ae8f2 16%,#62d0ea 40%,#3aa4da 62%,#2c7fcc 75%,#1f66b8 100%);box-shadow:0 1px 0 #0d3a64,0 2px 0 rgba(190,235,250,.7)}
 .r{display:flex;height:38px;margin-top:2px;position:relative}
 .b{box-sizing:border-box;height:38px;flex:none;background:linear-gradient(#9ccfea,#5faedb);border:1px solid #c3e2f2;border-radius:3px;display:flex;align-items:center;justify-content:center;box-shadow:0 0 0 1px rgba(20,60,100,.35)}
 .pdf{width:28px;height:28px;background:#2a0c0c;border:2px solid #8c2222;box-sizing:border-box;display:block}
 .cad{width:32px;height:32px;background:#f6e6e0;color:#b8282c;font:700 34px/32px "Liberation Sans",sans-serif;text-align:center;display:block;overflow:hidden}
 .folder{width:9px;height:24px;background:linear-gradient(#f6e070,#d8b840);display:block;margin-left:-6px}
 .tray{position:absolute;left:0;top:0;width:100%;height:38px;display:flex;align-items:center}
 .date{font:13px/16px "Noto Sans",sans-serif;color:#fff;margin:15px 0 0 21px;white-space:nowrap}
 .st{position:absolute;left:0;top:0}
 </style><div class="line"></div>
 <svg class="st" width="1728" height="47" viewBox="0 0 1728 47"><defs><linearGradient id="g" x1="0" y1="0" x2="1" y2="1"><stop offset="0" stop-color="#fff" stop-opacity=".5"/><stop offset="1" stop-color="#e8c8d8" stop-opacity=".2"/></linearGradient></defs><path d="M1190 9h22l72 38h-20z" fill="url(#g)"/></svg>
 <div class="r">
 <div class="b" style="width:16px;justify-content:flex-start;margin-left:-1px"><i class="folder" style="margin-left:2px"></i></div>
 <div class="b" style="width:57px;margin-left:10px"><i class="pdf">${sv(24,24,`<path d="M4 19c4-2 7-9 7-13 0-3-2-2-1 1s4 7 9 8c-4-1-10 1-15 4z" stroke="#eee"/>`)}</i></div>
 <div class="b" style="width:53px;margin-left:5px;background:linear-gradient(#cbe6f4,#92c8e6)"><span class="cad">A</span></div>
 <div class="tray" style="pointer-events:none">
  <span style="margin-left:1572px;display:block">${sv(16,14,`<path d="M4 2C7 0 9 3 14 1" stroke="#cfdfe8"/><rect x="1" y="5" width="14" height="8" rx="1" fill="#c8d4dc"/><path d="M3 7h10M3 9h10M4 11h8" stroke="#667"/>`)}</span>
  <span style="margin-left:16px;display:block">${sv(7,4,`<path d="M3.500 0L7 4H0z" fill="#eef"/>`)}</span>
  <span style="margin-left:14px;display:block">${qq}</span>
  <span style="margin-left:9px;display:block">${sv(15,16,`<rect x="3" y="3" width="11" height="9" stroke="#eee"/><rect x="0" y="0" width="5" height="6" fill="#eee"/><path d="M4 15h10" stroke="#eee" stroke-width="1.500"/>`)}</span>
  <span style="margin-left:8px;display:block">${sv(13,14,`<path d="M0 4h3l4-4v14l-4-4H0z" fill="#dde"/><path d="M9 4a4 4 0 0 1 0 6M11 2a7 7 0 0 1 0 10" stroke="#dde"/>`)}</span>
  <span class="date">2020</span>
 </div></div>`}},'task-bar');

mk(class extends Base{html(){
 const c='#3c3f44';
 const it=[[1380,sv(18,18,`<path d="M3 12L12 2l4 3-9 10-5 1z" stroke="${c}" stroke-width="1.300" stroke-linejoin="round"/><path d="M10.500 4l4 3" stroke="${c}"/>`),18],
 [1408,sv(16,16,`<rect x="1" y="1" width="14" height="14" stroke="${c}" stroke-width="1.200"/>`),16],
 [1436,sv(17,17,`<circle cx="8.500" cy="8.500" r="7" stroke="${c}" stroke-width="1.200"/>`),17],
 [1464,sv(16,16,`<path d="M1 15L15 1M5 1h10v10" stroke="${c}" stroke-width="1.200"/>`),16],
 [1492,`<span style="font:400 21px/18px 'Liberation Sans',sans-serif;color:${c};display:block">A</span>`,14],
 [1520,sv(18,18,`<path d="M3 15l-1-1 8-8 2 2-8 8z" stroke="${c}" stroke-width="1.200"/><path d="M8 8l2 2M13 1v3M15 5h3M11 3l1 1M15 3l-1 1M14 7l1 1" stroke="${c}"/>`),18],
 [1541,'<i class="sep"></i>',1],
 [1561,sv(17,17,`<path d="M3 6A6.500 6.500 0 1 1 5 14" stroke="${c}" stroke-width="1.200"/><path d="M2 1v5h5" stroke="${c}" stroke-width="1.200"/>`),17],
 [1590,sv(14,18,`<path d="M1 4h12M5 4V1.500h4V4M2 4v13h10V4M5.500 7v7M8.500 7v7" stroke="${c}" stroke-width="1.200"/>`),14],
 [1610,'<i class="sep"></i>',1],
 [1641,sv(18,18,`<path d="M1 6h3l5-4v14l-5-4H1z" stroke="${c}" stroke-width="1.200"/><path d="M12 6a4 4 0 0 1 0 6M14.500 4a7 7 0 0 1 0 10" stroke="${c}" stroke-width="1.200"/>`),18],
 [1675,sv(16,20,`<rect x="5" y="1" width="6" height="11" rx="3" stroke="${c}" stroke-width="1.200"/><path d="M1.500 9a6.500 6.500 0 0 0 13 0M8 15.500V19M4 19h8" stroke="${c}" stroke-width="1.200"/>`),16],
 [1710,sv(15,15,`<path d="M1 1l13 13M14 1L1 14" stroke="${c}" stroke-width="1.300"/>`),15]];
 let px=1361,o='';
 for(const [cx,svg,w] of it){const l=cx-w/2;o+=`<span class="i" style="margin-left:${l-px}px;width:${w}px">${svg}</span>`;px=l+w}
 return `<style>:host{position:absolute;left:1361px;top:0;width:367px;height:41px;background:linear-gradient(#e6edf5,#eef2f7);display:flex;align-items:center}
 .i{display:flex;justify-content:center;align-items:center;flex:none}.sep{display:block;width:1px;height:16px;background:#cdd2d8}
 </style>${o}`}},'note-toolbar');
</script>
</body></html>
